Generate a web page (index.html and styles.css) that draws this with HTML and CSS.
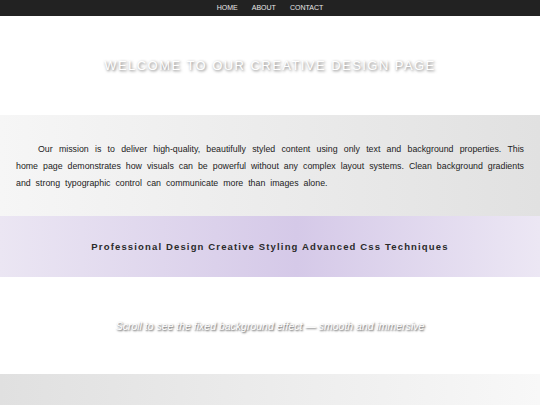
FILE: index.html
```html
<!DOCTYPE html>
<html lang="en">
<head>
<meta charset="utf-8">
<title>Creative Design</title>
<link rel="stylesheet" href="styles.css">
</head>
<body>
  <nav class="topnav">
    <a href="#">HOME</a>
    <a href="#">ABOUT</a>
    <a href="#">CONTACT</a>
  </nav>
  <header class="hero">
    <h1 class="hero-title">Welcome to Our Creative Design Page</h1>
  </header>
  <section class="mission">
    <p>Our mission is to deliver high-quality, beautifully styled content using only text and background properties. This home page demonstrates how visuals can be powerful without any complex layout systems. Clean background gradients and strong typographic control can communicate more than images alone.</p>
  </section>
  <section class="tagline">
    <p>professional design creative styling advanced css techniques</p>
  </section>
  <section class="scroll-note">
    <p>Scroll to see the fixed background effect — smooth and immersive</p>
  </section>
  <section class="footer-band"></section>
</body>
</html>
```
FILE: styles.css
```css
* { box-sizing: border-box; }

html, body {
  margin: 0;
  padding: 0;
  background: #fff;
  font-family: "Liberation Sans", Arial, sans-serif;
}

.topnav {
  height: 16px;
  background: #222;
  display: flex;
  justify-content: center;
  align-items: center;
  gap: 14px;
}

.topnav a {
  color: #e8e8e8;
  text-decoration: none;
  font-size: 7px;
  line-height: 16px;
}

.hero {
  height: 99px;
  display: flex;
  align-items: center;
  justify-content: center;
}

.hero-title {
  margin: 0;
  color: #fff;
  font-size: 13px;
  font-weight: normal;
  text-transform: uppercase;
  letter-spacing: 1.45px;
  text-shadow: 1px 1px 3px rgba(0, 0, 0, 0.6);
}

.mission {
  height: 101px;
  padding: 26px 16px 0;
  background: linear-gradient(90deg, #f6f6f6, #e1e1e1);
}

.mission p {
  margin: 0;
  font-size: 8.8px;
  line-height: 17px;
  color: #222;
  text-align: justify;
  text-indent: 22px;
  word-spacing: 2.5px;
}

.tagline {
  height: 61px;
  display: flex;
  align-items: center;
  justify-content: center;
  background: linear-gradient(90deg, #ebe6f3, #d5c9e8 55%, #ece7f4);
}

.tagline p {
  margin: 0;
  font-size: 9.5px;
  font-weight: bold;
  letter-spacing: 1.15px;
  color: #2a2a2a;
  text-transform: capitalize;
}

.scroll-note {
  height: 97px;
  display: flex;
  align-items: center;
  justify-content: center;
}

.scroll-note p {
  margin: 0;
  font-size: 10.5px;
  font-style: italic;
  color: #fff;
  text-shadow: 1px 1px 2px rgba(0, 0, 0, 0.75);
}

.footer-band {
  height: 60px;
  background: linear-gradient(90deg, #e0e0e0, #f8f8f8);
}
```
